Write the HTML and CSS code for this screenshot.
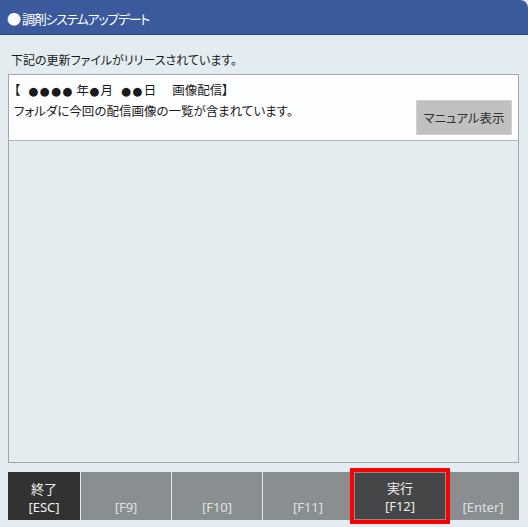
FILE: index.html
```html
<!DOCTYPE html>
<html lang="ja">
<head>
<meta charset="utf-8">
<link rel="stylesheet" href="styles.css">
</head>
<body>
<div class="titlebar"><span class="dot">●</span>調剤システムアップデート</div>
<div class="content">
  <div class="lead">下記の更新ファイルがリリースされています。</div>
  <div class="box">
    <div class="info">
      <div class="info-text">
        <div class="line">【<span class="bullet g1">●●●●</span><span class="g2">年</span><span class="bullet g0">●</span>月<span class="bullet g3">●●</span><span class="g0">日</span><span class="g5">画像配信】</span></div>
        <div class="line">フォルダに今回の配信画像の一覧が含まれています。</div>
      </div>
      <div class="manual">マニュアル表示</div>
    </div>
    <div class="list"></div>
  </div>
  <div class="keys">
    <div class="key dark esc"><span class="jp">終了</span><span>[ESC]</span></div>
    <div class="key grey"><span>[F9]</span></div>
    <div class="key grey"><span>[F10]</span></div>
    <div class="key grey"><span>[F11]</span></div>
    <div class="key run"><span class="jp">実行</span><span>[F12]</span></div>
    <div class="key grey enter"><span>[Enter]</span></div>
  </div>
</div>
</body>
</html>
```
FILE: styles.css
```css
html, body {
  margin: 0;
  padding: 0;
}
body {
  width: 528px;
  height: 527px;
  overflow: hidden;
  background: #e3edf1;
  font-family: "Noto Sans CJK JP", "Noto Sans", sans-serif;
  font-feature-settings: "palt";
  color: #1a1a1a;
}
.titlebar {
  height: 34px;
  border-bottom: 1px solid #2c4a8a;
  background: #3a5a9d;
  color: #ffffff;
  font-size: 13px;
  line-height: 36px;
  padding-left: 7px;
  border-top-right-radius: 8px;
  letter-spacing: -1.3px;
  white-space: nowrap;
}
.titlebar .dot {
  font-size: 14px;
  letter-spacing: 0;
  margin-right: 1px;
}
.content {
  padding: 15px 9px 0 8px;
}
.lead {
  font-size: 12px;
  line-height: 20px;
  padding-left: 3px;
  height: 20px;
  margin-bottom: 4px;
  white-space: nowrap;
}
.box {
  border: 1px solid #a3a7a9;
  height: 387px;
  display: flex;
  flex-direction: column;
}
.info {
  box-sizing: border-box;
  background: #fdfeff;
  border-bottom: 1px solid #b4b8ba;
  height: 66px;
  display: flex;
  align-items: flex-end;
  padding: 0 6px 5px 5px;
}
.info-text {
  flex: 1;
  align-self: flex-start;
  padding-top: 5px;
}
.line {
  font-size: 12.5px;
  line-height: 20px;
  white-space: nowrap;
}
.bullet {
  font-family: "DejaVu Sans", sans-serif;
  font-size: 11.5px;
  letter-spacing: 1.3px;
}
.g0 {
  margin-left: 0;
}
.g1 {
  margin-left: 8px;
}
.g2 {
  margin-left: 3px;
}
.g3 {
  margin-left: 8px;
}
.g5 {
  margin-left: 16px;
}
.manual {
  width: 96px;
  height: 35px;
  box-sizing: border-box;
  background: #c0c0c0;
  border: 1px solid #d2d2d2;
  color: #303030;
  font-size: 12.5px;
  line-height: 33px;
  text-align: center;
  white-space: nowrap;
}
.list {
  flex: 1;
  background: #e3edf0;
}
.keys {
  margin-top: 9px;
  display: flex;
  gap: 1px;
  height: 48px;
}
.key {
  flex: 1;
  box-sizing: border-box;
  display: flex;
  flex-direction: column;
  justify-content: flex-end;
  align-items: center;
  padding-bottom: 3px;
  font-family: "Noto Sans", "Noto Sans CJK JP", sans-serif;
  font-size: 13px;
  line-height: 19px;
}
.key .jp {
  font-family: "Noto Sans CJK JP", sans-serif;
  font-size: 13px;
}
.esc, .enter {
  flex: 0 0 72px;
}
.dark {
  background: #323232;
  color: #f2f2f2;
}
.grey {
  background: #8a8e90;
  color: #dfe1e2;
}
.run {
  background: #454647;
  color: #eeeeee;
  border: 1px solid #8d8d8d;
  outline: 4px solid #ff0000;
  position: relative;
  z-index: 1;
}
```
